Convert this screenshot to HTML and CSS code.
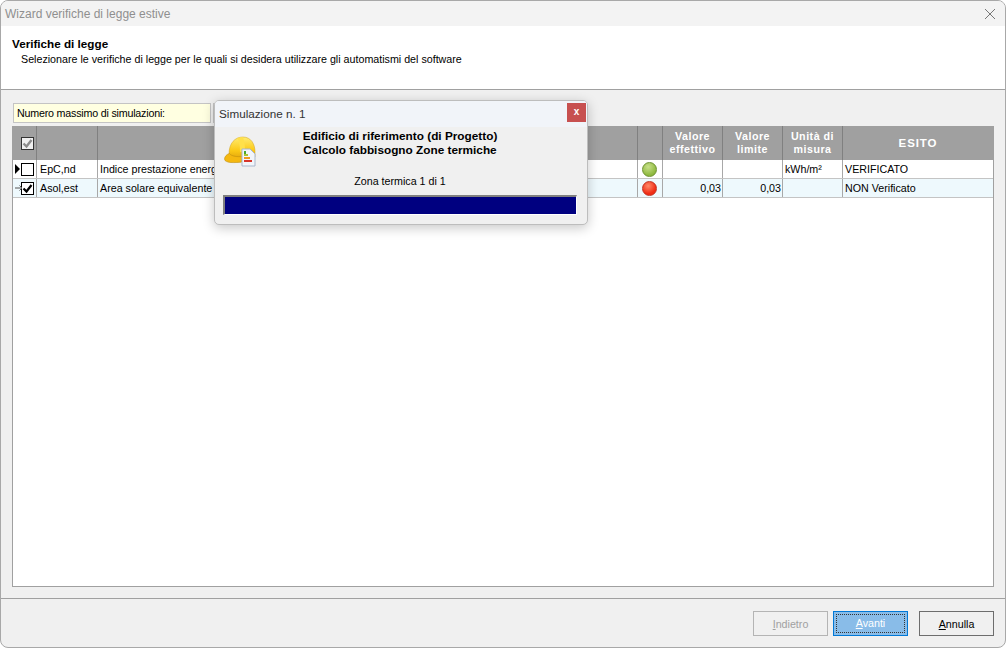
FILE: index.html
```html
<!DOCTYPE html>
<html lang="it">
<head>
<meta charset="utf-8">
<title>Wizard verifiche di legge estive</title>
<link rel="stylesheet" href="styles.css">
</head>
<body>
<div class="window">
  <div class="titlebar">
    <span class="title">Wizard verifiche di legge estive</span>
    <svg class="close" width="12" height="12" viewBox="0 0 12 12"><path d="M1 1l10 10M11 1L1 11" stroke="#777" stroke-width="1" fill="none"/></svg>
  </div>
  <div class="header">
    <div class="h-title">Verifiche di legge</div>
    <div class="h-sub">Selezionare le verifiche di legge per le quali si desidera utilizzare gli automatismi del software</div>
  </div>
  <div class="main">
    <div class="toolbar">
      <div class="field">Numero massimo di simulazioni:</div>
      <div class="spin"></div>
    </div>
    <div class="grid">
      <div class="row head">
        <div class="c c0"><span class="box gray"><svg width="11" height="11" viewBox="0 0 11 11"><path d="M1.500 5.500l3 3 5-6.500" stroke="#8c8c8c" stroke-width="2.400" fill="none"/></svg></span></div>
        <div class="c"></div>
        <div class="c"></div>
        <div class="c"></div>
        <div class="c">Valore<br>effettivo</div>
        <div class="c">Valore<br>limite</div>
        <div class="c">Unità di<br>misura</div>
        <div class="c esito">ESITO</div>
      </div>
      <div class="row">
        <div class="c c0"><svg class="ind" width="6" height="10" viewBox="0 0 6 10"><path d="M0 0l5 5-5 5z" fill="#000"/></svg><span class="box"></span></div>
        <div class="c txt">EpC,nd</div>
        <div class="c">Indice prestazione energetica</div>
        <div class="c dot-c"><span class="dot green"></span></div>
        <div class="c"></div>
        <div class="c"></div>
        <div class="c">kWh/m²</div>
        <div class="c">VERIFICATO</div>
      </div>
      <div class="row sel">
        <div class="c c0"><svg class="ind" width="8" height="8" viewBox="0 0 8 8"><path d="M0 4h7M4.500 1.500L7 4 4.500 6.500" stroke="#555" fill="none"/></svg><span class="box"><svg width="11" height="11" viewBox="0 0 11 11"><path d="M1.500 5.500l3 3 5-6.500" stroke="#000" stroke-width="2.200" fill="none"/></svg></span></div>
        <div class="c txt">Asol,est</div>
        <div class="c">Area solare equivalente</div>
        <div class="c dot-c"><span class="dot red"></span></div>
        <div class="c num">0,03</div>
        <div class="c num">0,03</div>
        <div class="c"></div>
        <div class="c">NON Verificato</div>
      </div>
    </div>
  </div>
  <div class="footer">
    <button class="btn off"><u>I</u>ndietro</button>
    <button class="btn primary"><span class="focus"><u>A</u>vanti</span></button>
    <button class="btn last"><u>A</u>nnulla</button>
  </div>
</div>
<div class="dialog">
  <div class="d-title">
    <span>Simulazione n. 1</span>
    <span class="d-close">x</span>
  </div>
  <div class="d-body">
    <svg class="helmet" width="34" height="32" viewBox="0 0 34 32">
      <defs>
        <linearGradient id="hg" x1="0" y1="0" x2="0" y2="1"><stop offset="0" stop-color="#ffec70"/><stop offset="0.55" stop-color="#fbc815"/><stop offset="1" stop-color="#d8960a"/></linearGradient>
      </defs>
      <path d="M5 19C5 8 11 2 19 2c8 0 12 7 12 15v5l-14 5H6z" fill="url(#hg)" stroke="#d0a020" stroke-width=".5"/>
      <path d="M0.500 24c0-2.500 2.500-5 5-5.500 2 3 8 3.500 13 3l-1 5.500c-6 .8-17 1.500-17-3z" fill="#f5b810" stroke="#b98a10" stroke-width=".5"/>
      <path d="M13 3c2.500 3 3 8 3 14l5-1c0-5-.5-10-2-14z" fill="#ffe04a"/>
      <path d="M18 14h8l5 5v12H18z" fill="#f2f5fa" stroke="#a9b6cc"/>
      <path d="M20 16l2 0 0 3h-2z" fill="#4aa82e"/>
      <rect x="20" y="19" width="4" height="2" fill="#a8c534"/>
      <rect x="20" y="22" width="6" height="2" fill="#f09a1f"/>
      <rect x="20" y="25" width="8" height="2" fill="#d8342a"/>
    </svg>
    <div class="d-head">Edificio di riferimento (di Progetto)<br>Calcolo fabbisogno Zone termiche</div>
    <div class="d-zone">Zona termica 1 di 1</div>
    <div class="bar"></div>
  </div>
</div>
</body>
</html>
```
FILE: styles.css
```css
* { box-sizing: border-box; }
html, body { margin: 0; height: 100%; background: #fff; overflow: hidden; }
body { font-family: "Liberation Sans", Arial, sans-serif; font-size: 10.7px; color: #000; position: relative; }
.window { width: 1006px; height: 648px; display: flex; flex-direction: column; background: #f0f0f0; border: 1px solid #a8a8a8; border-radius: 8px; overflow: hidden; }
.titlebar { height: 25px; flex: none; display: flex; align-items: center; justify-content: space-between; padding: 0 9px 0 4px; background: #f3f3f3; }
.title { font-size: 12px; color: #8f8f8f; }
.header { height: 64px; flex: none; background: #fff; border-bottom: 1px solid #a0a0a0; padding: 11px 11px 0; }
.h-title { font-weight: bold; font-size: 11.7px; line-height: 14px; }
.h-sub { padding-left: 9px; line-height: 16px; }
.main { flex: 1; display: flex; flex-direction: column; padding: 13px 11px 11px; border-bottom: 1px solid #a0a0a0; }
.toolbar { display: flex; gap: 2px; height: 20px; margin-left: 1px; flex: none; }
.field { width: 198px; background: #ffffe1; border: 1px solid #c4c4c4; padding-left: 3px; line-height: 18px; letter-spacing: -.2px; }
.spin { width: 40px; background: #fff; border: 1px solid #c4c4c4; }
.grid { flex: 1; margin-top: 3px; background: #fff; border: 1px solid #a0a0a0; border-top: 0; }
.row { display: grid; grid-template-columns: 24px 61px 540px 25px 60px 60px 60px 1fr; height: 19px; border-bottom: 1px solid #c4c4c4; }
.row.head { height: 34px; background: #a0a0a0; color: #fff; font-weight: bold; letter-spacing: .5px; text-align: center; border-bottom: 0; }
.row.head .c { border-right: 1px solid #808080; display: flex; align-items: center; justify-content: center; padding: 0; line-height: 13px; }
.row.head .c:last-child { border-right: 0; }
.row.head .esito { font-size: 11.5px; letter-spacing: .9px; }
.row.sel { background: #eef9fd; }
.c { border-right: 1px solid #a8a8a8; padding: 0 2px; line-height: 18px; white-space: nowrap; overflow: hidden; }
.row .c:last-child { border-right: 0; }
.row .txt { padding-left: 3px; }
.row .c0 { position: relative; display: flex; align-items: center; justify-content: flex-end; padding: 0 2px 0 0; }
.row.head .c0 { justify-content: flex-end; padding: 0 2px 0 0; }
.ind { position: absolute; left: 2px; top: 50%; transform: translateY(-50%); }
.box { width: 13px; height: 13px; border: 1px solid #000; background: #fff; display: block; }
.box svg { display: block; }
.box.gray { background: #f0f0f0; border-color: #333; }
.row .num { text-align: right; padding-right: 1px; }
.dot-c { display: flex; align-items: center; justify-content: flex-start; padding: 0 0 0 4px; }
.dot { width: 15px; height: 15px; border-radius: 50%; display: block; }
.green { background: radial-gradient(circle at 40% 30%, #c8e08a, #8db83e 70%); border: 1px solid #6c9130; }
.red { background: radial-gradient(circle at 40% 30%, #ff8a6a, #f02c14 65%); border: 1px solid #c03020; }
.footer { height: 48px; flex: none; display: flex; justify-content: flex-end; align-items: flex-start; padding: 12px 11px 0 0; }
.btn { width: 75px; height: 25px; font: 10.7px "Liberation Sans", Arial, sans-serif; background: #f0f0f0; border: 1px solid #6d6d6d; padding: 0; color: #000; }
.btn.off { color: #a0a0a0; border-color: #b4b4b4; margin-right: 5px; }
.btn.primary { background: #89bce8; border-color: #0078d7; color: #fff; padding: 2px; margin-right: 11px; }
.focus { display: block; height: 100%; border: 1px dotted #333; line-height: 17px; }
.dialog { position: absolute; left: 214px; top: 100px; width: 374px; height: 125px; background: #f0f0f0; border: 1px solid #bdbdbd; border-radius: 5px; box-shadow: 0 3px 12px rgba(0,0,0,.22); overflow: hidden; }
.d-title { height: 26px; background: #f1f4f9; display: flex; justify-content: space-between; align-items: flex-start; padding: 6px 0 0 4px; font-size: 11.7px; color: #333; position: relative; }
.d-close { position: absolute; right: 1px; top: 2px; width: 19px; height: 19px; background: #c75050; color: #fff; text-align: center; font-weight: bold; font-size: 10px; line-height: 17px; }
.d-body { position: relative; height: 98px; display: flex; flex-direction: column; align-items: stretch; padding: 2px 10px 0 8px; text-align: center; }
.helmet { position: absolute; left: 9px; top: 8px; }
.d-head { font-weight: bold; font-size: 11.8px; line-height: 14px; }
.d-zone { margin-top: 17px; line-height: 14px; }
.bar { margin-top: 7px; height: 20px; background: #000080; border: 2px solid #808080; border-right: 1px solid #fff; border-bottom: 1px solid #fff; }
```
